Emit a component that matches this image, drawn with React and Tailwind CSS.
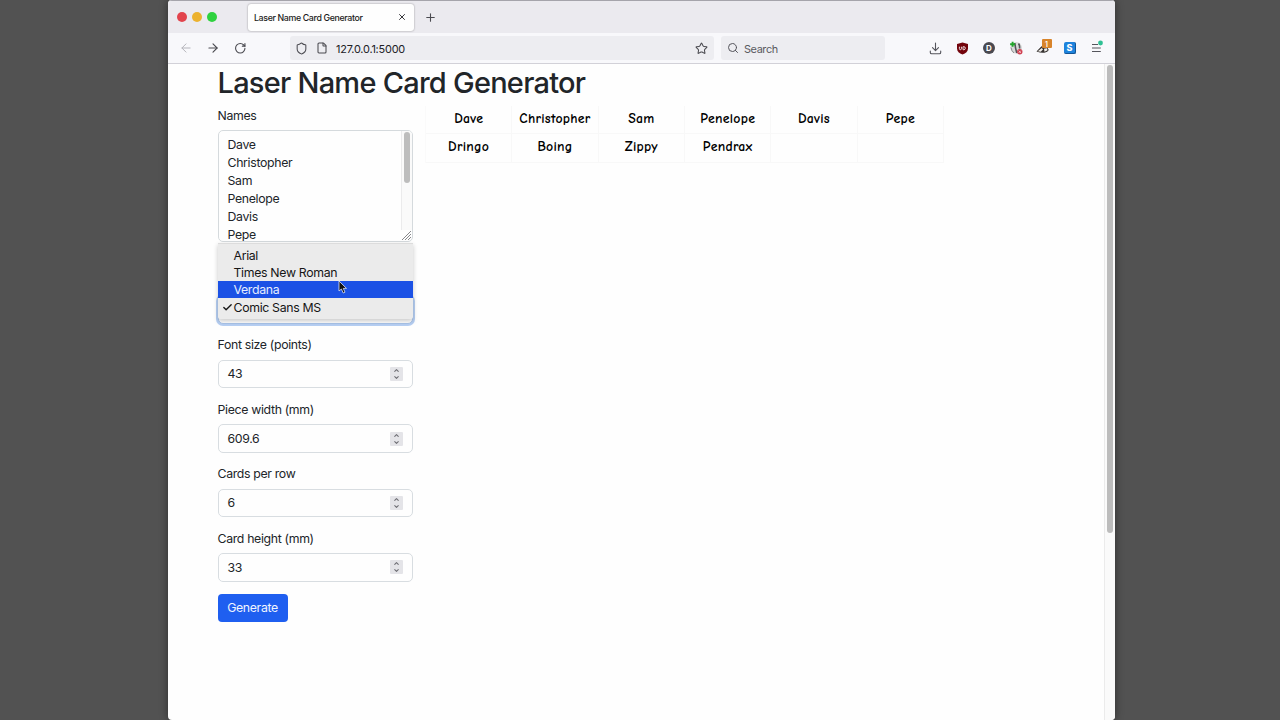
import React from 'react';
import { ArrowLeft, ArrowRight, RotateCw, Shield, File, Star, Search, X, Plus, Check, ChevronUp, ChevronDown } from 'lucide-react';

const names = ['Dave', 'Christopher', 'Sam', 'Penelope', 'Davis', 'Pepe'];

const cards = [
    'Dave', 'Christopher', 'Sam', 'Penelope', 'Davis', 'Pepe',
    'Dringo', 'Boing', 'Zippy', 'Pendrax', '', '',
];

const fields = [
    { label: 'Font size (points)', value: '43' },
    { label: 'Piece width (mm)', value: '609.6' },
    { label: 'Cards per row', value: '6' },
    { label: 'Card height (mm)', value: '33' },
];

const fonts = ['Arial', 'Times New Roman', 'Verdana', 'Comic Sans MS'];

const TabBar = () => (
    <div className="flex h-[33px] shrink-0 items-center border-t border-[#a5a4ab] bg-[#ebeaef]">
        <div className="ml-[9px] flex gap-[5.5px]">
            <span className="size-[9.5px] rounded-full bg-[#e2444d]" />
            <span className="size-[9.5px] rounded-full bg-[#ecb22f]" />
            <span className="size-[9.5px] rounded-full bg-[#2fd23f]" />
        </div>
        <div className="ml-[31.5px] flex h-[27px] w-[166px] items-center justify-between rounded-[3px] bg-[#fefefe] pr-[7px] pl-[6px] shadow-[0_0_2px_rgba(0,0,0,0.4)]">
            <span className="pt-[2px] text-[8.8px] font-medium tracking-[-0.35px] whitespace-nowrap text-[#1b1b20]">Laser Name Card Generator</span>
            <X size={10} strokeWidth={2.4} className="text-[#38383d]" />
        </div>
        <Plus size={13} strokeWidth={2} className="ml-[9.5px] text-[#4a4a50]" />
    </div>
);

const Extensions = () => (
    <div className="flex h-full items-center">
        <svg width="13" height="13" viewBox="0 0 13 13" fill="none" stroke="#55555c" strokeWidth="1.1" strokeLinecap="round" strokeLinejoin="round">
            <path d="M6.5 1v7.5M3.5 5.7l3 3 3-3M1.3 9v1.5q0 1.3 1.3 1.3h7.8q1.3 0 1.3-1.3V9" />
        </svg>
        <svg className="ml-[14px]" width="13" height="13" viewBox="0 0 13 13">
            <path d="M6.5 .5 12 2v4.6c0 3-2.2 4.8-5.5 6C3.2 11.4 1 9.6 1 6.6V2z" fill="#73040c" />
            <path d="M3.4 4.7v2q0 1 1 1t1-1v-2" fill="none" stroke="#eedde0" strokeWidth="1" />
            <path d="M7 4.7v3h.8a1.5 1.5 0 0 0 0-3z" fill="none" stroke="#eedde0" strokeWidth="1" />
        </svg>
        <span className="ml-[14px] flex size-[12px] items-center justify-center rounded-full bg-[#4a4950] text-[8px] font-bold text-white">D</span>
        <svg className="ml-[14px]" width="14" height="14" viewBox="0 0 14 14">
            <circle cx="7.2" cy="6.8" r="5.8" fill="#d8d9d8" />
            <path d="M5.8 2q.5 5 2 10M9.5 2.5q1.500 2 1 5" fill="none" stroke="#56545a" strokeWidth="1.6" />
            <path d="M2 6.5q.5 3.5 3 5.5" fill="none" stroke="#8a8a8d" strokeWidth="1" />
            <path d="M3.6 .8v5M1.1 3.3h5" stroke="#22a52b" strokeWidth="1.9" />
            <circle cx="10.8" cy="10.8" r="2.7" fill="#cf3f50" />
            <path d="m9.700 9.700 2.200 2.200m0-2.200-2.200 2.200" stroke="#f5c9ce" strokeWidth=".9" />
        </svg>
        <div className="relative ml-[13px] h-[16px] w-[16px]">
            <svg width="16" height="16" viewBox="0 0 16 16">
                <path d="M.5 11.5 5 6.8q3-2.8 6 .3l1.800 3q-1 2.400-4.500 2.600-3 .5-7.800-1.200z" fill="#35312f" />
                <path d="m1.800 11.300 4-3.200 1.200 1.400-2.300 2.300zM8 8.800l3-.5.5 2-3 1.500z" fill="#f1eeea" />
            </svg>
            <span className="absolute -top-[1px] left-[5.5px] flex h-[9px] w-[10px] items-center justify-center rounded-[1px] bg-[#d8842b] text-[8px] font-medium text-white">1</span>
        </div>
        <span className="ml-[12px] flex size-[12px] items-center justify-center rounded-[2px] border-r-[1.5px] border-b-[1.5px] border-[#125394] bg-[#1e83dc] text-[9px] font-extrabold text-white">S</span>
        <svg className="ml-[15px]" width="13" height="16" viewBox="0 0 13 16">
            <path d="M1 4.500h6M1 8h8.800M1 11.500h8.800" stroke="#55555c" strokeWidth="1.1" fill="none" />
            <circle cx="9.500" cy="3" r="2.400" fill="#2fc094" />
        </svg>
    </div>
);

const Toolbar = () => (
    <div className="flex h-[31px] shrink-0 items-center border-b border-[#d2d1d8] bg-[#f8f8fb]">
        <ArrowLeft size={14} strokeWidth={1.7} className="ml-[10.5px] text-[#b4b4ba]" />
        <ArrowRight size={14} strokeWidth={1.9} className="ml-[13px] text-[#4a4a50]" />
        <RotateCw size={12.5} strokeWidth={2.1} className="ml-[14px] text-[#4a4a50]" />
        <div className="ml-[43.5px] flex h-[24px] w-[424px] items-center rounded-[3px] bg-[#ededf1] pr-[6px] pl-[5px]">
            <Shield size={13} strokeWidth={1.9} className="text-[#4a4a50]" />
            <File size={12} strokeWidth={2.1} className="ml-[8.5px] text-[#4a4a50]" />
            <span className="ml-[8px] pt-[1.5px] text-[10.9px] tracking-[-0.2px] text-[#202025]">127.0.0.1:5000</span>
            <Star size={13} strokeWidth={1.9} className="ml-auto text-[#4a4a50]" />
        </div>
        <div className="ml-[7px] flex h-[24px] w-[164px] items-center rounded-[3px] bg-[#ededf1] pl-[6.5px]">
            <Search size={12} strokeWidth={2} className="text-[#55555c]" />
            <span className="ml-[5px] pt-[1.5px] text-[10.9px] tracking-[-0.4px] text-[#5a5a61]">Search</span>
        </div>
        <div className="ml-auto h-full pr-[11px]">
            <Extensions />
        </div>
    </div>
);

const NumberField = ({ label, value }) => (
    <div className="h-[64.4px]">
        <label className="block h-[19px] leading-[19px]">{label}</label>
        <div className="mt-[5.5px] flex h-[28.5px] items-center justify-between rounded-[5px] border border-[#d8dde1] pr-[9px] pl-[9px]">
            <span className="pt-px">{value}</span>
            <span className="flex h-[14px] w-[13px] flex-col items-center justify-center rounded-[1px] bg-[#e4e4e8] text-[#6e6e74]">
                <ChevronUp size={7} strokeWidth={3.6} />
                <ChevronDown size={7} strokeWidth={3.6} />
            </span>
        </div>
    </div>
);

const NamesBox = () => (
    <div className="relative mt-[5px] h-[112px] overflow-hidden rounded-[5px] border border-[#d5dadd] pt-[5px] pl-[9px]">
        {names.map((name) => (
            <div key={name} className="h-[18px] leading-[18px]">{name}</div>
        ))}
        {/* scrollbar track and thumb */}
        <div className="absolute top-0 right-0 h-[99px] w-[11px] border-l border-[#ebebec] bg-[#fafafa]">
            <div className="mt-px ml-[2px] h-[51px] w-[6px] rounded-full bg-[#bdbdbd]" />
        </div>
        <svg className="absolute right-0 bottom-0" width="11" height="11" viewBox="0 0 11 11">
            <path d="M1 10 10 1M4 10l6-6M7 10l3-3" stroke="#88888b" strokeWidth="1" />
        </svg>
    </div>
);

const FontSelect = () => (
    <div className="relative mt-[29px] h-[64.4px]">
        <div className="h-[24.5px]" />
        <div className="h-[28.5px] rounded-[5px] border border-[#a9c4ea] bg-white shadow-[0_0_0_2px_#b6cff3]" />
        <div className="absolute -top-[28.5px] left-0 w-[195.5px] rounded-b-[2px] border-t border-[#dcdcdc] bg-[#ebebeb] pt-[3px] pb-[3px] text-[#161616] shadow-[0_2px_5px_rgba(0,0,0,0.22)]">
            {fonts.map((font) => (
                <div
                    key={font}
                    className={font === 'Verdana' ? 'flex h-[17.3px] items-center bg-[#1b51e5] pt-[1.5px] text-[#e5edff]' : 'flex h-[17.3px] items-center pt-[1.5px]'}
                >
                    <span className="flex w-[16px] justify-end pr-px">
                        {font === 'Comic Sans MS' && <Check size={11} strokeWidth={3} />}
                    </span>
                    {font}
                </div>
            ))}
        </div>
        <svg className="absolute top-[9px] left-[120.5px]" width="10" height="14" viewBox="0 0 10 14">
            <path d="M1 1v10l2.400-2 1.800 4 1.800-.8-1.700-3.800H8.500z" fill="#111" stroke="#dfe5f5" strokeWidth=".8" />
        </svg>
    </div>
);

const CardGrid = () => (
    <div className="mt-[41.5px] ml-[12px] grid h-[57px] w-[519px] grid-cols-6 grid-rows-2 border-l border-[#fafafa] font-['Comic_Sans_MS','Comic_Neue','Open_Sans',sans-serif] text-[13.8px] font-bold tracking-[0.25px] text-black">
        {cards.map((card, index) => (
            <div key={index} className="flex items-center justify-center border-r border-b border-[#f8f8f8]">
                {card}
            </div>
        ))}
    </div>
);

const App = () => {
    return (
        <div className="flex h-[720px] w-[1280px] justify-center overflow-hidden bg-[#525252] pl-[3px] font-['Inter',sans-serif]">
            <div className="flex w-[947px] flex-col overflow-hidden rounded-[4px] bg-[#fefefe] shadow-[0_0_8px_rgba(0,0,0,0.45)]">
                <TabBar />
                <Toolbar />
                <div className="flex flex-1 text-[12.3px] tracking-[-0.33px] text-[#212529]">
                    <main className="flex flex-1 pl-[49.5px]">
                        <div className="w-[195.5px]">
                            <h1 className="mt-[2px] h-[34px] text-[29px] leading-[34px] font-medium tracking-[-0.75px] whitespace-nowrap">Laser Name Card Generator</h1>
                            <label className="mt-[6px] block h-[19px] leading-[19px]">Names</label>
                            <NamesBox />
                            <FontSelect />
                            {fields.map((field) => (
                                <NumberField key={field.label} label={field.label} value={field.value} />
                            ))}
                            <button className="mt-px block h-[28px] w-[70px] rounded-[4px] bg-[#1f5ff0] tracking-[-0.33px] text-[#f0f5ff]">Generate</button>
                        </div>
                        <CardGrid />
                    </main>
                    <div className="w-[11px] border-l border-[#ebebeb] bg-[#fafafa]">
                        <div className="mt-[1px] ml-[2px] h-[468px] w-[6px] rounded-full bg-[#bcbcbc]" />
                    </div>
                </div>
            </div>
        </div>
    );
};

export default App;
